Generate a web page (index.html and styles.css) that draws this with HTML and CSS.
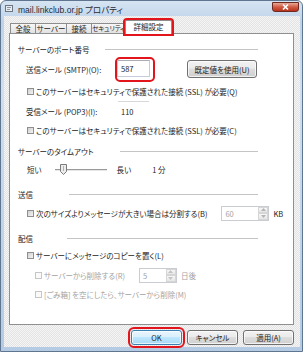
FILE: index.html
```html
<!DOCTYPE html>
<html lang="ja">
<head>
  <meta charset="UTF-8">
  <title>mail.linkclub.or.jp プロパティ</title>
  <link rel="stylesheet" href="styles.css">
</head>
<body>

<div class="window">
  <div class="titlebar">
    <svg class="app-icon" width="8" height="7" viewBox="0 0 8 7">
      <rect x="0.5" y="0.5" width="7" height="6" fill="#e8ecf0" stroke="#6b7580"/>
      <path d="M2 2.5h4M2 4.5h3" stroke="#8a96a3"/>
    </svg>
    <span class="title">mail.linkclub.or.jp プロパティ</span>
    <span class="close-btn">
      <svg width="7" height="6" viewBox="0 0 7 6">
        <path d="M1 0.5l5 5M6 0.5l-5 5" stroke="#fff" stroke-width="1.6"/>
      </svg>
    </span>
  </div>

  <div class="client">
    <div class="tabs">
      <span class="tab tab-general">全般</span>
      <span class="tab tab-server">サーバー</span>
      <span class="tab tab-connect">接続</span>
      <span class="tab tab-security">セキュリティ</span>
      <span class="tab active">詳細設定</span>
    </div>

    <div class="panel">
      <div class="group-title title-port"><span>サーバーのポート番号</span><span class="rule rule-port"></span></div>

      <div class="row row-smtp">
        <span class="field-label">送信メール (SMTP)(O):</span>
        <span class="mark-box"><span class="edit">587</span></span>
        <span class="btn btn-reset">既定値を使用(U)</span>
      </div>

      <div class="row check-row row-ssl-out">
        <span class="check"></span>
        <span>このサーバーはセキュリティで保護された接続 (SSL) が必要(Q)</span>
      </div>

      <div class="row row-pop">
        <span class="field-label">受信メール (POP3)(I):</span>
        <span class="static-field">110</span>
      </div>

      <div class="row check-row row-ssl-in">
        <span class="check"></span>
        <span>このサーバーはセキュリティで保護された接続 (SSL) が必要(C)</span>
      </div>

      <div class="group-title title-timeout"><span>サーバーのタイムアウト</span><span class="rule rule-timeout"></span></div>

      <div class="row row-slider">
        <span>短い</span>
        <svg class="slider" width="52" height="12" viewBox="0 0 52 12">
          <path d="M0 6.5h52" stroke="#9a9a9a"/>
          <path d="M0 7.5h52" stroke="#e6e6e6"/>
          <path d="M5.5 1.5h6v7l-3 3l-3-3z" fill="#ececec" stroke="#7b7b7b"/>
          <path d="M8.5 3v5" stroke="#b0b0b0"/>
        </svg>
        <span class="long-label">長い</span>
        <span class="minutes">1 分</span>
      </div>

      <div class="group-title title-send"><span>送信</span><span class="rule rule-send"></span></div>

      <div class="row check-row row-split">
        <span class="check"></span>
        <span>次のサイズよりメッセージが大きい場合は分割する(B)</span>
        <span class="spin spin-kb">
          <span class="spin-value">60</span>
          <span class="spin-arrows">
            <span><svg width="5" height="3" viewBox="0 0 5 3"><path d="M0 3h5L2.5 0z" fill="#b5b5b5"/></svg></span>
            <span><svg width="5" height="3" viewBox="0 0 5 3"><path d="M0 0h5L2.5 3z" fill="#b5b5b5"/></svg></span>
          </span>
        </span>
        <span class="unit">KB</span>
      </div>

      <div class="group-title title-deliver"><span>配信</span><span class="rule rule-deliver"></span></div>

      <div class="row check-row row-keep">
        <span class="check"></span>
        <span>サーバーにメッセージのコピーを置く(L)</span>
      </div>

      <div class="row check-row row-delete disabled">
        <span class="check"></span>
        <span>サーバーから削除する(R)</span>
        <span class="spin spin-days">
          <span class="spin-value">5</span>
          <span class="spin-arrows">
            <span><svg width="5" height="3" viewBox="0 0 5 3"><path d="M0 3h5L2.5 0z" fill="#c4c4c4"/></svg></span>
            <span><svg width="5" height="3" viewBox="0 0 5 3"><path d="M0 0h5L2.5 3z" fill="#c4c4c4"/></svg></span>
          </span>
        </span>
        <span class="unit">日後</span>
      </div>

      <div class="row check-row row-trash disabled">
        <span class="check"></span>
        <span>[ごみ箱] を空にしたら、サーバーから削除(M)</span>
      </div>
    </div>

    <div class="buttons">
      <span class="btn btn-dialog btn-ok">OK</span>
      <span class="btn btn-dialog">キャンセル</span>
      <span class="btn btn-dialog">適用(A)</span>
    </div>
  </div>
</div>

</body>
</html>
```

FILE: styles.css
```css
* {
  box-sizing: border-box;
}
body {
  margin: 0;
  font-family: "Noto Sans CJK JP", sans-serif;
  font-size: 7.5px;
  font-feature-settings: "palt";
  color: #1b1b1b;
}
.window {
  width: 303px;
  height: 352px;
  border: 1px solid #5f7590;
  border-radius: 6px 6px 0 0;
  padding: 0 2px 4px 3px;
  background: linear-gradient(180deg, #d6e4f2 0, #bed3e9 6%, #cfdfef 25%, #b4cbe3 100%);
  display: flex;
  flex-direction: column;
}
.titlebar {
  height: 15px;
  display: flex;
  align-items: center;
}
.app-icon {
  margin-left: 1px;
}
.title {
  margin-left: 5px;
  font-family: "Liberation Sans", "Noto Sans CJK JP", sans-serif;
  font-size: 8.5px;
  color: #1e2a38;
}
.close-btn {
  align-self: flex-start;
  margin: 1px 1px 0 auto;
  width: 27px;
  height: 10px;
  border: 1px solid #6e2a20;
  border-radius: 0 0 3px 3px;
  background: linear-gradient(#e9a897, #d25b43 50%, #b8321c);
  display: flex;
  align-items: center;
  justify-content: center;
}
.client {
  flex: 1;
  background: repeating-conic-gradient(#e3e3e3 0 25%, #f5f5f5 0 50%) 0 0 / 2px 2px;
  padding: 4px 6px 0 5px;
  display: flex;
  flex-direction: column;
}

/* tabs */
.tabs {
  display: flex;
  align-items: flex-end;
  height: 13px;
  padding-left: 1px;
}
.tab {
  flex: none;
  height: 10px;
  margin-right: -1px;
  white-space: nowrap;
  border: 1px solid #8d8d8d;
  border-bottom: none;
  background: linear-gradient(#f7f7f7, #e1e1e1);
  font-size: 7.5px;
  line-height: 9px;
  text-align: center;
}
.tab-general { width: 26px; }
.tab-server { width: 32px; }
.tab-connect { width: 26px; }
.tab-security {
  width: 35px;
  font-size: 6.6px;
  letter-spacing: -0.2px;
}
.tab.active {
  position: relative;
  z-index: 1;
  width: 47px;
  height: 14px;
  margin-bottom: -1px;
  background: #fff;
  border-radius: 2px 2px 0 0;
  line-height: 12px;
  outline: 2px solid #e2141c;
}
.panel {
  height: 292px;
  background: #fff;
  border: 1px solid #8e8f8f;
  padding-left: 8px;
}

/* group headers */
.group-title {
  display: flex;
  align-items: center;
  justify-content: space-between;
  width: 240px;
  height: 12px;
}
.rule {
  border-top: 1px solid #c4c4c4;
}
.title-port { margin-top: 9px; }
.title-timeout { margin-top: 9px; }
.title-send { margin-top: 13px; }
.title-deliver { margin-top: 11px; }
.rule-port { width: 153px; }
.rule-timeout { width: 138px; }
.rule-send { width: 189px; }
.rule-deliver { width: 191px; }

/* rows */
.row {
  display: flex;
  align-items: center;
  height: 12px;
  margin-left: 8px;
}
.check-row {
  padding-left: 1px;
}
.check {
  flex: none;
  width: 7px;
  height: 7px;
  margin-right: 2px;
  border: 1px solid #8e8f8f;
  background: linear-gradient(135deg, #cfcfcf, #f4f4f4);
}
.disabled {
  color: #a3a3a3;
  padding-left: 9px;
}
.disabled .check {
  border-color: #c6c6c6;
  background: #fafafa;
}
.field-label {
  width: 89px;
}
.row-smtp {
  margin-top: 4px;
  height: 20px;
}
.mark-box {
  display: flex;
  padding: 1px 3px 3px 0;
  border: 2px solid #e2141c;
  border-radius: 5px;
}
.edit {
  display: flex;
  align-items: center;
  width: 33px;
  height: 17px;
  padding-left: 3px;
  border: 1px solid #c5cdd8;
  border-top-color: #abadb3;
  background: #fff;
}
.btn {
  display: flex;
  align-items: center;
  justify-content: center;
  border: 1px solid #707070;
  border-radius: 3px;
  background: linear-gradient(#f2f2f2, #ebebeb 45%, #dddddd 50%, #cfcfcf);
  box-shadow: inset 0 0 0 1px rgba(255, 255, 255, 0.7);
}
.btn-reset {
  width: 70px;
  height: 18px;
  margin-left: 32px;
}
.row-ssl-out { margin-top: 6px; }
.row-pop {
  margin-top: 4px;
  height: 20px;
}
.static-field {
  display: flex;
  align-items: center;
  width: 31px;
  height: 20px;
  margin-left: 3px;
  padding-left: 3px;
  border-top: 1px solid #d8d8d8;
}
.row-ssl-in { margin-top: 3px; }
.row-slider {
  margin-top: 6px;
  padding-left: 1px;
}
.slider {
  margin-left: 13px;
}
.long-label {
  margin-left: 10px;
}
.minutes {
  margin-left: 21px;
}
.row-split {
  margin-top: 5px;
  height: 16px;
}
.spin {
  display: flex;
  height: 15px;
  border: 1px solid #c9ccd1;
  background: #fff;
}
.spin-kb {
  width: 48px;
  margin-left: 14px;
}
.spin-value {
  flex: 1;
  padding-left: 3px;
  line-height: 13px;
  color: #a3a3a3;
}
.spin-arrows {
  display: flex;
  flex-direction: column;
  width: 10px;
}
.spin-arrows span {
  flex: 1;
  display: flex;
  align-items: center;
  justify-content: center;
  border: 1px solid #d6d6d6;
  background: linear-gradient(#f7f7f7, #e6e6e6);
}
.unit {
  margin-left: 4px;
}
.row-keep { margin-top: 5px; }
.row-delete {
  margin-top: 6px;
  height: 16px;
}
.spin-days {
  width: 38px;
  margin-left: 14px;
}
.row-trash { margin-top: 5px; }

/* dialog buttons */
.buttons {
  display: flex;
  justify-content: flex-end;
  gap: 5px;
  height: 15px;
  margin-top: 5px;
}
.btn-dialog {
  width: 51px;
}
.btn-ok {
  border-color: #3c7fb1;
  background: linear-gradient(#eaf6fd, #d9f0fc 45%, #bee6fd 50%, #a7d9f5);
  outline: 2px solid #e2141c;
  outline-offset: 1px;
}
```
